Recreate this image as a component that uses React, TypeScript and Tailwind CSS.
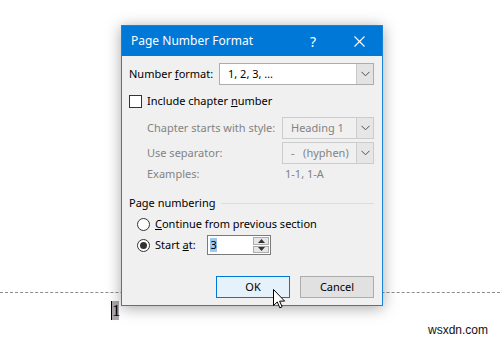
import React from "react";

const Chevron = () => (
  <svg width="9" height="6" viewBox="0 0 9 6" className="block">
    <path d="M0.5 0.8 L4.5 4.8 L8.5 0.8" fill="none" stroke="#4d4d4d" strokeWidth="1" />
  </svg>
);

function Select({ value, width, disabled }: { value: string; width: string; disabled?: boolean }) {
  return (
    <div
      className={`${width} shrink-0 h-[22px] flex border ${
        disabled ? "border-[#cccccc] bg-[#f0f0f0] text-[#838383]" : "border-[#adadad] bg-white text-[#000]"
      }`}
    >
      <div className="flex-1 flex items-center pl-[8px] whitespace-pre">{value}</div>
      <div
        className={`w-[17px] flex items-center justify-center border-l ${
          disabled ? "border-[#cccccc] bg-[#e6e6e6]" : "border-[#c8c8c8] bg-[#e3e3e3]"
        }`}
      >
        <Chevron />
      </div>
    </div>
  );
}

function Radio({ checked }: { checked?: boolean }) {
  return (
    <div className="w-[13px] h-[13px] shrink-0 rounded-full border border-[#333] bg-white flex items-center justify-center">
      {checked && <div className="w-[7px] h-[7px] rounded-full bg-[#333]" />}
    </div>
  );
}

export default function App() {
  return (
    <div
      className="relative w-[500px] h-[348px] bg-white overflow-hidden text-[11px] text-black whitespace-nowrap"
      style={{ fontFamily: '"Noto Sans", "Open Sans", sans-serif' }}
    >
      {/* document underneath */}
      <div className="pt-[292px]">
        <div className="border-t border-dashed border-[#8c8c8c]" />
        <div className="ml-[111px] mt-[8px] flex h-[19px]">
          <div className="w-[1px] bg-black" />
          <div
            className="w-[7px] bg-[#a8a8a8] text-[17px] leading-[19px] text-black"
            style={{ fontFamily: '"Liberation Serif", serif' }}
          >
            1
          </div>
        </div>
      </div>

      <div
        className="absolute right-[12px] bottom-[9px] text-[12px] text-[#111]"
        style={{ fontFamily: '"Liberation Sans", sans-serif' }}
      >
        wsxdn.com
      </div>

      {/* dialog */}
      <div className="absolute left-[121px] top-[25px] w-[262px] h-[281px] border border-[#1883d7] bg-[#f0f0f0] shadow-[0_2px_14px_rgba(0,0,0,0.35)] flex flex-col">
        <div className="h-[30px] shrink-0 bg-[#0078d7] flex items-center text-white">
          <div className="pl-[9px] text-[12px] flex-1">Page Number Format</div>
          <div className="w-[46px] text-center text-[14px]">?</div>
          <div className="w-[46px] flex items-center justify-center">
            <svg width="11" height="11" viewBox="0 0 11 11">
              <path d="M0.5 0.5 L10.5 10.5 M10.5 0.5 L0.5 10.5" stroke="white" strokeWidth="1.1" />
            </svg>
          </div>
        </div>

        <div className="flex flex-col pl-[7px] pr-[8px]">
          {/* number format */}
          <div className="mt-[7px] h-[22px] flex items-center">
            <div className="w-[90px] shrink-0">
              Number <span className="underline">f</span>ormat:
            </div>
            <Select value="1, 2, 3, …" width="w-[155px]" />
          </div>

          {/* include chapter */}
          <div className="mt-[8px] h-[16px] flex items-center">
            <div className="w-[13px] h-[13px] shrink-0 border border-[#333] bg-white" />
            <div className="ml-[5px]">
              Include chapter <span className="underline">n</span>umber
            </div>
          </div>

          <div className="mt-[8px] h-[22px] flex items-center text-[#838383]">
            <div className="ml-[18px] w-[135px] shrink-0">Chapter starts with style:</div>
            <Select value="Heading 1" width="w-[92px]" disabled />
          </div>
          <div className="mt-[3px] h-[22px] flex items-center text-[#838383]">
            <div className="ml-[18px] w-[135px] shrink-0">Use separator:</div>
            <Select value="-   (hyphen)" width="w-[92px]" disabled />
          </div>
          <div className="mt-[2px] h-[16px] flex items-center text-[#838383]">
            <div className="ml-[18px] w-[138px] shrink-0">Examples:</div>
            <div>1-1, 1-A</div>
          </div>

          {/* page numbering */}
          <div className="mt-[13px] h-[16px] flex items-center">
            <div>Page numbering</div>
            <div className="flex-1 ml-[6px] h-[1px] bg-[#dcdcdc]" />
          </div>
          <div className="mt-[5px] h-[16px] flex items-center pl-[8px]">
            <Radio />
            <div className="ml-[5px]">
              <span className="underline">C</span>ontinue from previous section
            </div>
          </div>
          <div className="mt-[3px] h-[20px] flex items-center pl-[8px]">
            <Radio checked />
            <div className="ml-[5px] w-[52px] shrink-0">
              Start <span className="underline">a</span>t:
            </div>
            <div className="w-[64px] h-[20px] shrink-0 border border-[#7a7a7a] bg-white flex">
              <div className="flex-1 flex items-center pl-[2px]">
                <span className="bg-[#9dc8ef] leading-[14px] px-[0.5px]">3</span>
              </div>
              <div className="w-[16px] flex flex-col my-[1px] mr-[1px] gap-[1px]">
                <div className="flex-1 bg-[#e6e6e6] border border-[#acacac] flex items-center justify-center">
                  <svg width="7" height="4" viewBox="0 0 7 4">
                    <path d="M0 4 L3.5 0 L7 4 Z" fill="#333" />
                  </svg>
                </div>
                <div className="flex-1 bg-[#e6e6e6] border border-[#acacac] flex items-center justify-center">
                  <svg width="7" height="4" viewBox="0 0 7 4">
                    <path d="M0 0 L3.5 4 L7 0 Z" fill="#333" />
                  </svg>
                </div>
              </div>
            </div>
          </div>

          {/* buttons */}
          <div className="mt-[21px] h-[22px] flex justify-end gap-[10px]">
            <div className="w-[74px] h-[22px] border border-[#0078d7] bg-[#e5f1fb] flex items-center justify-center">
              OK
            </div>
            <div className="w-[74px] h-[22px] border border-[#adadad] bg-[#e1e1e1] flex items-center justify-center">
              Cancel
            </div>
          </div>
        </div>
      </div>

      {/* mouse cursor */}
      <svg className="absolute left-[273px] top-[289px]" width="13" height="20" viewBox="0 0 13 20">
        <path
          d="M0.5 0.5 L0.5 16.5 L4.3 12.9 L6.8 18.8 L9.1 17.8 L6.6 12.1 L11.6 12.1 Z"
          fill="white"
          stroke="black"
          strokeWidth="1"
          strokeLinejoin="miter"
        />
      </svg>
    </div>
  );
}
